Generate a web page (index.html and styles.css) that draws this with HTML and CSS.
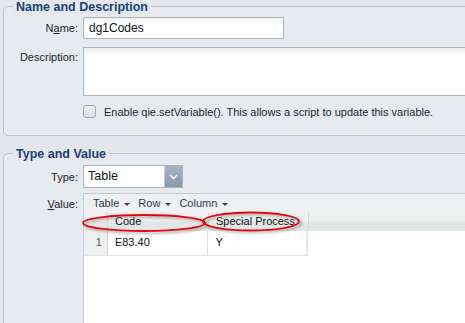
FILE: index.html
```html
<!DOCTYPE html>
<html>
<head>
<meta charset="utf-8">
<link rel="stylesheet" href="styles.css">
</head>
<body>
<div class="page">
  <section class="group group-name">
    <div class="legend">Name and Description</div>
    <div class="row row-name">
      <label class="lbl">N<u>a</u>me:</label>
      <div class="input name-input">dg1Codes</div>
    </div>
    <div class="row row-desc">
      <label class="lbl">Description:</label>
      <div class="input textarea"></div>
    </div>
    <div class="row row-check">
      <span class="checkbox"></span>
      <span class="check-text">Enable qie.setVariable(). This allows a script to update this variable.</span>
    </div>
  </section>

  <section class="group group-type">
    <div class="legend">Type and Value</div>
    <div class="row row-type">
      <label class="lbl">Type:</label>
      <div class="select">
        <span class="select-text">Table</span>
        <span class="select-btn">
          <svg width="9" height="6" viewBox="0 0 9 6"><path d="M1 1 L4.5 4.5 L8 1" fill="none" stroke="#eef2f6" stroke-width="1.6"/></svg>
        </span>
      </div>
    </div>
    <div class="row row-value">
      <label class="lbl"><u>V</u>alue:</label>
      <div class="grid-widget">
        <div class="toolbar">
          <span class="menu">Table <i class="caret"></i></span>
          <span class="menu">Row <i class="caret"></i></span>
          <span class="menu">Column <i class="caret"></i></span>
        </div>
        <div class="grid">
          <div class="grid-row header">
            <div class="cell num"></div>
            <div class="cell c1">Code</div>
            <div class="cell c2">Special Process</div>
          </div>
          <div class="grid-row data">
            <div class="cell num">1</div>
            <div class="cell c1">E83.40</div>
            <div class="cell c2">Y</div>
          </div>
        </div>
        <svg class="marks" width="240" height="30" viewBox="0 0 240 30">
          <defs>
            <filter id="sh" x="-10%" y="-50%" width="120%" height="200%">
              <feGaussianBlur stdDeviation="1.2"/>
            </filter>
          </defs>
          <ellipse cx="63" cy="14" rx="61" ry="8" fill="none" stroke="#7a7a7a" stroke-width="2" opacity="0.55" filter="url(#sh)"/>
          <ellipse cx="170" cy="12.5" rx="48" ry="9" fill="none" stroke="#7a7a7a" stroke-width="2" opacity="0.55" filter="url(#sh)"/>
          <ellipse cx="61" cy="12" rx="61" ry="8" fill="none" stroke="#e8060c" stroke-width="1.8"/>
          <ellipse cx="168" cy="10.5" rx="48" ry="9" fill="none" stroke="#e8060c" stroke-width="1.8"/>
        </svg>
      </div>
    </div>
  </section>
</div>
</body>
</html>
```
FILE: styles.css
```css
html, body {
  margin: 0;
  padding: 0;
}
body {
  width: 465px;
  height: 323px;
  overflow: hidden;
  background: #e2e7eb;
  font-family: "Liberation Sans", Arial, sans-serif;
  font-size: 11px;
  color: #1a1a2e;
}
.page {
  width: 560px;
  padding: 6px 0 0 3px;
}
.group {
  border: 1px solid #bcc5cd;
  border-radius: 5px;
  background: #e7ebef;
  box-sizing: border-box;
}
.legend {
  display: table;
  margin: -7px 0 0 9px;
  padding: 0 3px;
  background: #e4e8ec;
  font-weight: bold;
  font-size: 12.5px;
  color: #203f78;
  line-height: 14px;
  height: 14px;
}
.group-name {
  height: 130px;
}
.group-type {
  margin-top: 17px;
  height: 200px;
}
.row {
  display: flex;
  align-items: flex-start;
}
.lbl {
  width: 74px;
  text-align: right;
  padding-right: 5px;
  color: #1d2030;
  font-size: 11px;
  flex: none;
}
.row-name {
  margin-top: 3px;
  align-items: center;
}
.input {
  background: #fff;
  border: 1px solid #a9b6c4;
  box-sizing: border-box;
}
.name-input {
  width: 201px;
  height: 22px;
  padding: 2px 0 0 5px;
  font-size: 12px;
  line-height: 16px;
  color: #111;
  box-shadow: inset 0 2px 2px rgba(0,0,0,0.06);
}
.row-desc {
  margin-top: 8px;
}
.row-desc .lbl {
  padding-top: 4px;
}
.textarea {
  width: 420px;
  height: 49px;
  box-shadow: inset 0 4px 4px rgba(0,0,0,0.07);
}
.row-check {
  margin-top: 9px;
  padding-left: 79px;
  align-items: center;
}
.checkbox {
  width: 11px;
  height: 11px;
  border: 1px solid #a6abb3;
  border-radius: 3px;
  background: linear-gradient(#eef0f3, #dde1e6);
  margin-right: 8px;
}
.check-text {
  font-size: 11px;
  color: #1d1d35;
}
.row-type {
  margin-top: 4px;
  align-items: center;
}
.select {
  width: 100px;
  height: 23px;
  box-sizing: border-box;
  border: 1px solid #a9b6c4;
  background: #fff;
  display: flex;
}
.select-text {
  flex: 1;
  padding: 3px 0 0 4px;
  font-size: 12.5px;
  color: #111;
}
.select-btn {
  width: 17px;
  background: linear-gradient(#a8b6c4, #8798aa);
  display: flex;
  align-items: center;
  justify-content: center;
  border-left: 1px solid #c5ced6;
}
.row-value {
  margin-top: 5px;
}
.row-value .lbl {
  padding-top: 5px;
}
.grid-widget {
  position: relative;
  width: 420px;
  height: 140px;
  border: 1px solid #c6ccd3;
  border-right: none;
  background: #fff;
}
.toolbar {
  height: 18px;
  background: #eef1f4;
  display: flex;
  align-items: center;
  padding-left: 9px;
  gap: 8px;
  font-size: 11px;
  color: #32384a;
}
.caret {
  display: inline-block;
  width: 0;
  height: 0;
  border-left: 3px solid transparent;
  border-right: 3px solid transparent;
  border-top: 3px solid #3a4050;
  vertical-align: middle;
  margin-left: 2px;
}
.grid-row {
  display: flex;
  width: 224px;
}
.cell {
  box-sizing: border-box;
  font-size: 11px;
  color: #111;
  border-right: 1px solid #dcdfe0;
  padding-left: 7px;
}
.num {
  width: 24px;
  padding-left: 0;
  padding-right: 5px;
  text-align: right;
  color: #555;
  background: #eef0f0;
  border-right: 1px solid #d2d6d6;
}
.c1 { width: 101px; }
.c2 { width: 100px; }
.header {
  height: 19px;
  line-height: 19px;
  background: linear-gradient(#eef0f0 0%, #eef0f0 45%, #e2e6e6 55%, #e2e6e6 100%);
  width: 100%;
}
.header .cell { border-right-color: #d6d9da; }
.header .num { background: transparent; }
.data {
  height: 24px;
  line-height: 23px;
  border-bottom: 1px solid #e4e6e6;
}
.data .c2 { border-right: 2px solid #e4e6e6; }
.marks {
  position: absolute;
  left: -1px;
  top: 17px;
  pointer-events: none;
  overflow: visible;
}
```
